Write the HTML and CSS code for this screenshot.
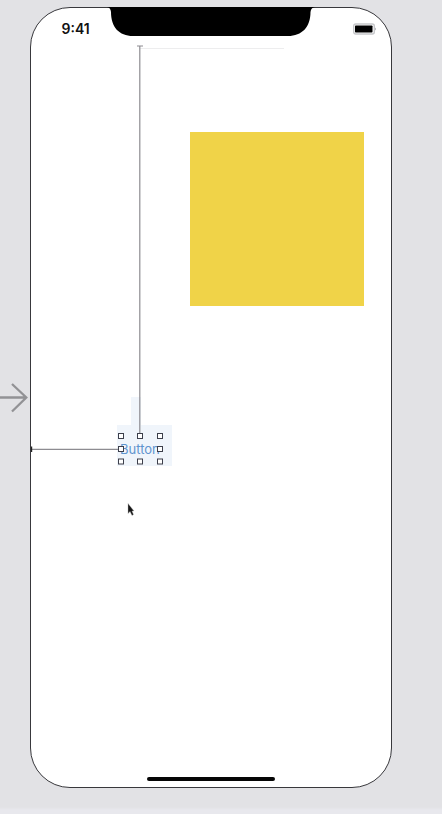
FILE: index.html
```html
<!DOCTYPE html>
<html lang="en">
<head>
<meta charset="utf-8">
<title>Interface canvas</title>
<link rel="stylesheet" href="styles.css">
</head>
<body>
<main class="canvas">
  <svg class="entry-arrow" width="30" height="34" viewBox="0 0 30 34" aria-hidden="true">
    <path d="M0 17.500H26M12 4L26.300 17.500L12 31.500"/>
  </svg>
  <section class="device">
    <header class="status-bar">
      <time class="clock">9:41</time>
      <svg class="notch" width="208" height="30" viewBox="0 0 208 30" aria-hidden="true">
        <path d="M0 0H208Q204 .5 203.500 5C203.500 20 195 29 181 29H26C12 29 4 20 4 5Q3.500 .5 0 0Z"/>
      </svg>
      <svg class="battery" width="24" height="12" viewBox="0 0 24 12" aria-hidden="true">
        <rect class="battery-shell" x=".7" y="1" width="20.600" height="10" rx="2"/>
        <rect x="2" y="2.500" width="17.500" height="7" rx=".7"/>
        <path class="battery-cap" d="M22 4.500Q24 6 22 7.500Z"/>
      </svg>
    </header>
    <div class="stage">
      <div class="yellow-view"></div>
      <svg class="guides" width="360" height="500" viewBox="0 0 360 500" aria-hidden="true">
        <path class="highlight" d="M100 390H110V418H141V459H86V418H100Z"/>
        <path class="safe-area" d="M109 41.500H253"/>
        <path class="guide" d="M108.800 39V426M106 39H112M0 442.300H87"/>
        <path class="guide-end" d="M.2 439.500V445"/>
      </svg>
      <div class="button-label">Button</div>
      <svg class="handles" width="46" height="32" viewBox="0 0 46 32" aria-hidden="true">
        <g>
          <rect x=".5" y=".5" width="5" height="5"/><rect x="19.500" y=".5" width="5" height="5"/><rect x="39.500" y=".5" width="5" height="5"/>
          <rect x=".5" y="13.500" width="5" height="5"/><rect x="39.500" y="13.500" width="5" height="5"/>
          <rect x=".5" y="26" width="5" height="5"/><rect x="19.500" y="26" width="5" height="5"/><rect x="39.500" y="26" width="5" height="5"/>
        </g>
      </svg>
      <svg class="cursor" width="8" height="14" viewBox="0 0 8 14" aria-hidden="true">
        <path d="M1 .5V10.500L3 8.500L5 12.500L6.500 11.500L5 8H7Z"/>
      </svg>
    </div>
    <div class="home-indicator"></div>
  </section>
</main>
</body>
</html>
```

FILE: styles.css
```css
body {
  margin: 0;
  background: #e2e2e5;
  font-family: Inter, "Liberation Sans", sans-serif;
}

.canvas {
  position: relative;
  box-sizing: border-box;
  height: 814px;
  padding: 7px 0 0 30px;
  overflow: hidden;
  background: linear-gradient(#e2e2e5 0 807px, #e8e8ed 810px);
}

.entry-arrow {
  position: absolute;
  left: 0;
  top: 380px;
  fill: none;
  stroke: #929295;
  stroke-width: 2.3;
}

.device {
  position: relative;
  display: flex;
  flex-direction: column;
  box-sizing: border-box;
  width: 362px;
  height: 781px;
  border: 1px solid #38383c;
  border-radius: 40px;
  background: #fff;
}

.status-bar {
  display: grid;
  grid-template-columns: 76px 208px 76px;
  height: 30px;
}

.clock {
  padding: 12px 0 0 30.5px;
  color: #111;
  font-size: 14px;
  font-weight: 600;
  line-height: 18px;
}

.notch {
  margin-top: -1px;
}

.battery {
  margin: 15px 0 0 38px;
}

.battery-shell {
  fill: #fff;
  stroke: #c6c7ca;
  stroke-width: 1.4;
}

.battery-cap {
  fill: #b2b2b5;
}

.stage {
  flex: 1;
}

/* Objects placed freely on the design surface. */
.yellow-view {
  position: absolute;
  left: 159px;
  top: 124px;
  width: 174px;
  height: 174px;
  background: #f0d348;
}

.guides {
  position: absolute;
  left: 0;
  top: -1px;
  fill: none;
}

.highlight {
  fill: #f0f5fb;
}

.safe-area {
  stroke: #ededee;
}

.guide {
  stroke: #8d8c91;
  stroke-width: 1.2;
}

.guide-end {
  stroke: #222;
  stroke-width: 2;
}

.button-label {
  position: absolute;
  left: 89px;
  top: 432px;
  color: #5f94cf;
  font-size: 13px;
  line-height: 18px;
}

.handles {
  position: absolute;
  left: 87px;
  top: 425px;
  fill: #fff;
  stroke: #3c3f4b;
}

.cursor {
  position: absolute;
  left: 96px;
  top: 495px;
  fill: #171717;
  stroke: #b5b5b5;
  stroke-width: .4;
}

.home-indicator {
  width: 128px;
  height: 4px;
  margin: 0 auto 6px;
  border-radius: 2px;
  background: #050505;
}
```
